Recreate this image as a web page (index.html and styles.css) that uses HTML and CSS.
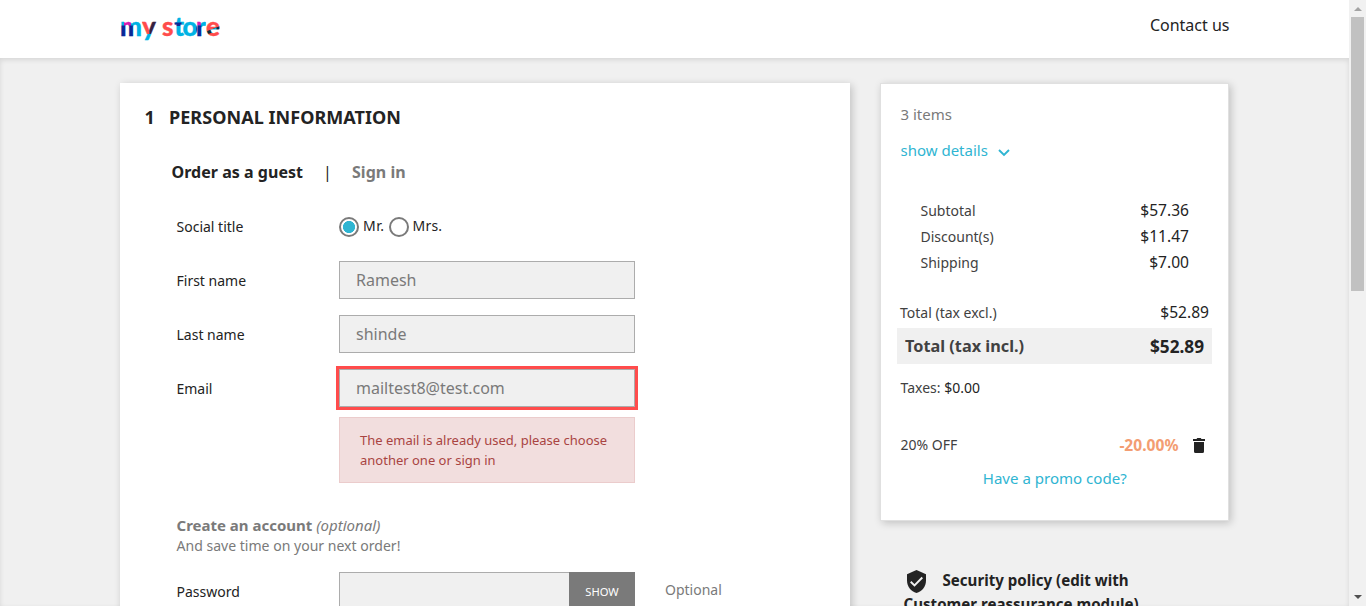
FILE: index.html
```html
<!DOCTYPE html>
<html lang="en">
<head>
<meta charset="utf-8">
<title>Checkout</title>
<link rel="stylesheet" href="styles.css">
</head>
<body>
<div class="page">
  <header class="header">
    <svg class="logo" width="104" height="34" viewBox="0 0 104 34">
      <defs>
        <pattern id="logo-fill" patternUnits="userSpaceOnUse" width="104" height="34">
          <rect width="104" height="34" fill="#00b2e3"/>
          <rect x="4" y="0" width="7" height="12" fill="#d61bb0"/>
          <rect x="0" y="11.5" width="8" height="12" fill="#0a2896"/>
          <rect x="8" y="11.5" width="5" height="12" fill="#0a2896"/>
          <rect x="22" y="0" width="7.500" height="20" fill="#ff4c4c"/>
          <rect x="29.5" y="0" width="7.500" height="20" fill="#36203f"/>
          <rect x="41" y="0" width="13" height="34" fill="#ff4c4c"/>
          <rect x="54" y="8.5" width="7.500" height="3.500" fill="#0a2896"/>
          <rect x="76" y="0" width="5" height="11.500" fill="#d61bb0"/>
          <rect x="76" y="11.500" width="5.500" height="12" fill="#0a2896"/>
          <rect x="86" y="0" width="18" height="34" fill="#ff4c4c"/>
          <path d="M86 17.500l18-7v3.500l-18 7z" fill="#102a38"/>
          <path d="M91.5 15.500l5-2v3.400l-5 2z" fill="#00b2e3"/>
        </pattern>
      </defs>
      <text class="logo-text" x="0 22 42 42 54.300 62.500 76 86" y="22" fill="url(#logo-fill)" stroke="url(#logo-fill)" stroke-width=".3">my<tspan class="gap"> </tspan>store</text>
    </svg>
    <a class="contact">Contact us</a>
  </header>
  <main class="wrapper">
    <section class="card step">
      <h1 class="step-title"><span class="step-number">1</span>Personal Information</h1>
      <nav class="tabs"><a class="tab active">Order as a guest</a><span class="divider">|</span><a class="tab">Sign in</a></nav>
      <div class="row row-title">
        <label class="label">Social title</label>
        <div class="radios"><span class="radio checked"></span><span class="radio-text">Mr.</span><span class="radio"></span><span class="radio-text">Mrs.</span></div>
      </div>
      <div class="row"><label class="label">First name</label><div class="input">Ramesh</div></div>
      <div class="row"><label class="label">Last name</label><div class="input">shinde</div></div>
      <div class="row"><label class="label">Email</label><div class="input focused">mailtest8@test.com</div></div>
      <div class="alert">The email is already used, please choose another one or sign in</div>
      <div class="create"><p class="create-title"><b>Create an account</b> <i>(optional)</i></p><p>And save time on your next order!</p></div>
      <div class="row row-password">
        <label class="label">Password</label>
        <div class="group"><div class="input"></div><button class="show">SHOW</button></div>
        <span class="hint">Optional</span>
      </div>
    </section>
    <aside class="side">
      <section class="card summary">
        <p class="count">3 items</p>
        <p class="details">show details<svg class="chevron" width="12" height="8" viewBox="0 0 12 8"><path d="M1 1l5 5 5-5" fill="none" stroke="#2fb5d2" stroke-width="1.9"/></svg></p>
        <div class="lines">
          <p class="line"><span>Subtotal</span><span class="value">$57.36</span></p>
          <p class="line"><span>Discount(s)</span><span class="value">$11.47</span></p>
          <p class="line"><span>Shipping</span><span class="value">$7.00</span></p>
        </div>
        <p class="line excl"><span>Total (tax excl.)</span><span class="value">$52.89</span></p>
        <p class="line total"><span>Total (tax incl.)</span><span class="total-value">$52.89</span></p>
        <p class="taxes">Taxes: <span class="dark">$0.00</span></p>
        <p class="line voucher"><span>20% OFF</span><span class="off"><span class="percent">-20.00%</span><svg class="trash" width="12" height="16" viewBox="0 0 12 16"><path d="M1 4h10v9.500a1.500 1.500 0 0 1-1.500 1.500h-7a1.500 1.500 0 0 1-1.500-1.500zM0 1h3.500l.8-1h3.400l.8 1H12v2H0z" fill="#232323"/></svg></span></p>
        <p class="promo">Have a promo code?</p>
      </section>
      <div class="policy">
        <svg class="shield" width="19" height="23" viewBox="0 0 19 23"><path d="M9.500 0L19 4.200v6.300c0 5.800-4 11.100-9.500 12.500C4 21.600 0 16.300 0 10.500V4.200z" fill="#232323"/><path d="M3.700 11.800l3.800 3.700 7.800-8" fill="none" stroke="#f0f0f0" stroke-width="1.900"/></svg>Security policy (edit with Customer reassurance module)
      </div>
    </aside>
  </main>
</div>
<div class="scrollbar"><span class="arrow up"></span><span class="thumb"></span><span class="arrow down"></span></div>
</body>
</html>
```
FILE: styles.css
```css
* { box-sizing: border-box; }
body { margin: 0; height: 606px; overflow: hidden; display: flex; background: #f0f0f0; font-family: "Noto Sans", sans-serif; font-size: 14px; line-height: 20px; color: #232323; }
p, h1 { margin: 0; }
.page { width: 1349px; height: 606px; overflow: hidden; }
.header { height: 58px; padding: 14px 119.500px 0 120px; background: #fff; display: flex; justify-content: space-between; align-items: flex-start; }
.logo { overflow: visible; }
.logo-text { font: 900 26px Lato, sans-serif; }
.contact { font-size: 16px; line-height: 22px; }
.wrapper { height: 548px; padding: 25px 120px 0; display: flex; align-items: flex-start; gap: 30px; box-shadow: inset 0 2px 5px rgba(0,0,0,.11); }
.card { background: #fff; box-shadow: 2px 2px 8px rgba(0,0,0,.2); }
.step { width: 730px; height: 620px; padding: 21px 24.500px; }
.step-title { font-size: 18px; line-height: 26px; font-weight: 700; letter-spacing: .05px; text-transform: uppercase; display: flex; }
.step-number { width: 24.500px; }
.tabs { margin: 31px 0 0 27px; display: flex; font-size: 16px; line-height: 22px; }
.tab { color: #7a7a7a; font-weight: 700; letter-spacing: .03px; }
.tab.active { color: #232323; }
.divider { width: 49px; text-align: center; }
.row { display: flex; align-items: center; height: 38px; margin: 0 0 16px 32px; }
.row-title { height: 20px; margin: 34px 0 24px 32px; }
.row-title .label { padding-top: 0; }
.label { width: 162.500px; padding-top: 2px; }
.radios { display: flex; align-items: center; }
.radio { width: 20px; height: 20px; border: 2px solid #7a7a7a; border-radius: 50%; background: #fff; }
.radio.checked { background: radial-gradient(circle, #2fb5d2 5.800px, #fff 6.300px); }
.radio-text { margin: -2px 4px 0; letter-spacing: .5px; }
.radio-text:last-child { letter-spacing: .2px; }
.input { width: 296px; height: 38px; padding: 0 16px; border: 1px solid #acacac; background: #f0f0f0; color: #7a7a7a; font-size: 16px; line-height: 37px; }
.focused { outline: 3px solid #ff4c4c; }
.alert { width: 296px; height: 66px; margin: -6px 0 0 194.500px; padding: 12px 20px; border: 1px solid #ebcccc; background: #f2dede; color: #a94442; font-size: 13px; line-height: 20px; }
.create { margin: 32px 0 16px 32px; color: #7a7a7a; font-size: 14.050px; line-height: 20px; }
.create-title { font-size: 15px; margin-bottom: 1px; }
.group { display: flex; }
.group .input { width: 230px; border-right: 0; }
.show { width: 66px; height: 38px; border: 0; background: #7a7a7a; color: #fff; font: 11.200px "Noto Sans", sans-serif; padding-top: 2px; }
.hint { margin-left: 30px; padding-bottom: 2px; font-size: 14px; color: #7a7a7a; }
.side { width: 349px; }
.summary { height: 438px; border: 1px solid #e0e0e0; padding: 20px 19px 0 19.500px; }
.count { color: #7a7a7a; font-size: 15px; }
.details { margin-top: 16px; color: #2fb5d2; font-size: 15px; }
.chevron { margin-left: 10.500px; vertical-align: -1px; }
.lines { margin: 38px 20px 0; }
.line { display: flex; justify-content: space-between; align-items: center; height: 26px; color: #414141; }
.value { font-size: 15.600px; color: #232323; margin-top: -2px; }
.excl { margin: 24px 0 2px -.500px; }
.total { height: 36px; margin: 0 -3px 0 -3.500px; padding: 0 8px; background: #f0f0f0; font-size: 16.300px; font-weight: 700; }
.total-value { color: #232323; font-size: 17.200px; padding-top: 1px; }
.taxes { margin-top: 14px; color: #414141; }
.dark { color: #232323; }
.voucher { margin-top: 34px; }
.off { display: flex; align-items: center; margin-right: 4px; color: #f39d72; font-size: 15.600px; font-weight: 700; }
.percent { margin-top: -1px; }
.trash { margin-left: 14.500px; position: relative; top: 1px; }
.promo { margin-top: 10px; text-align: center; color: #2fb5d2; font-size: 15.050px; }
.policy { margin-top: 48px; padding-left: 23.500px; width: 280px; font-size: 15.100px; line-height: 22px; font-weight: 700; }
.shield { margin: 0 17px 0 3px; vertical-align: -7px; }
.scrollbar { width: 17px; height: 606px; padding: 7px 2px; background: #f1f1f1; display: flex; flex-direction: column; align-items: center; }
.thumb { width: 13px; height: 274px; margin-top: 6px; background: #c1c1c1; }
.arrow { border: 4px solid transparent; }
.up { border-top: 0; border-bottom-color: #a3a3a3; }
.down { margin-top: auto; border-bottom: 0; border-top-color: #505050; }
```
